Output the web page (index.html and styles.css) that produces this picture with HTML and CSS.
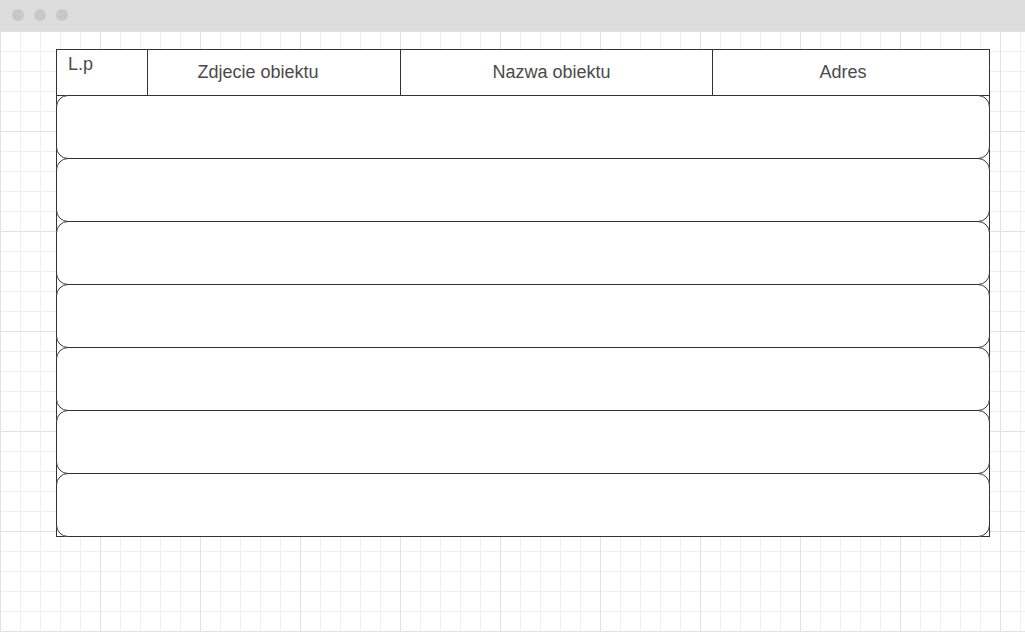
FILE: index.html
```html
<!DOCTYPE html>
<html lang="pl">
<head>
<meta charset="utf-8">
<title>Lista obiektów</title>
<link rel="stylesheet" href="styles.css">
</head>
<body>
<div class="titlebar">
  <span class="dot"></span>
  <span class="dot"></span>
  <span class="dot"></span>
</div>
<main class="canvas">
  <div class="table">
    <div class="head">
      <div class="cell cell-lp">L.p</div>
      <div class="cell cell-photo">Zdjecie obiektu</div>
      <div class="cell cell-name">Nazwa obiektu</div>
      <div class="cell cell-addr">Adres</div>
    </div>
    <div class="row"></div>
    <div class="row"></div>
    <div class="row"></div>
    <div class="row"></div>
    <div class="row"></div>
    <div class="row"></div>
    <div class="row last"></div>
  </div>
</main>
</body>
</html>
```

FILE: styles.css
```css
* { box-sizing: border-box; }

html, body {
  margin: 0;
  padding: 0;
  height: 100%;
  background: #ffffff;
  font-family: "Liberation Sans", Arial, sans-serif;
  overflow: hidden;
}

.titlebar {
  height: 31px;
  background: #dddddd;
  display: flex;
  align-items: center;
  gap: 10px;
  padding: 0 0 2px 12px;
}

.dot {
  width: 12px;
  height: 12px;
  border-radius: 50%;
  background: #c8c8c8;
}

.canvas {
  height: calc(100% - 31px);
  padding: 18px 0 0 56px;
  background-color: #ffffff;
  background-image:
    linear-gradient(to right, #e2e2e2 1px, transparent 1px),
    linear-gradient(to bottom, #e2e2e2 1px, transparent 1px),
    linear-gradient(to right, #efefef 1px, transparent 1px),
    linear-gradient(to bottom, #efefef 1px, transparent 1px);
  background-size: 100px 100px, 100px 100px, 20px 20px, 20px 20px;
}

.table {
  width: 934px;
  border: 1px solid #333333;
  background: #ffffff;
}

.head {
  display: grid;
  grid-template-columns: 90px 253px 312px 277px;
  height: 46px;
  border-bottom: 1px solid #333333;
}

.cell {
  display: flex;
  align-items: center;
  justify-content: center;
  padding-bottom: 2px;
  font-size: 18px;
  line-height: 20px;
  color: #4a4a4a;
}

.cell + .cell { border-left: 1px solid #333333; }

.cell-lp {
  align-items: flex-start;
  justify-content: flex-start;
  padding: 4px 0 0 11px;
}

.cell-photo { padding-right: 32px; }
.cell-name { padding-right: 10px; }
.cell-addr { padding-right: 16px; }

.row {
  height: 64px;
  margin: -1px -1px 0 -1px;
  border: 1px solid #333333;
  border-radius: 12px;
  background: #ffffff;
}

.row.last { margin-bottom: -1px; }
```
